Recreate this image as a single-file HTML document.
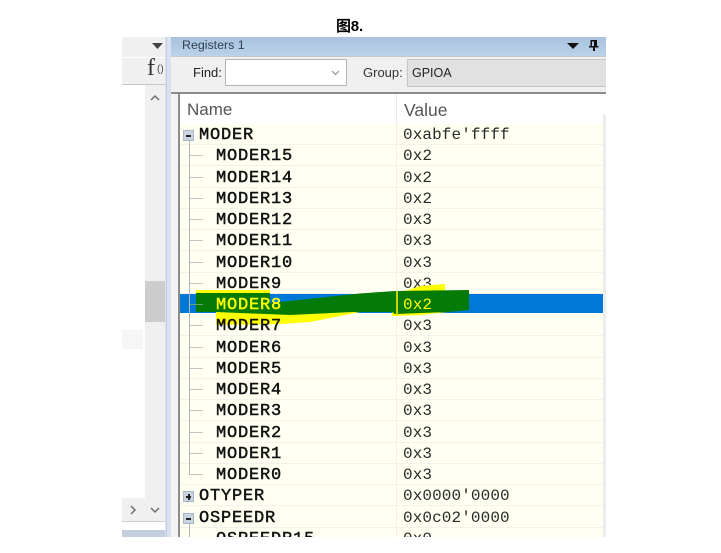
<!DOCTYPE html>
<html><head><meta charset="utf-8"><style>
html,body{margin:0;padding:0;background:#fff}
body{width:721px;height:553px;position:relative;overflow:hidden;font-family:"Liberation Sans","Noto Sans CJK SC",sans-serif}
.a{position:absolute}
#list{position:absolute;left:180px;top:124px;width:423px;height:413px;overflow:hidden;background:#fffff2}
.r{position:absolute;left:0;width:423px;height:20px;border-bottom:1.25px solid #f2f2ea;font:normal 17px/23px "Liberation Mono",monospace;letter-spacing:.8px;color:#111;white-space:nowrap}
.r b{position:absolute;top:0;font-weight:normal;-webkit-text-stroke:.45px currentColor}
.r i{position:absolute;left:223px;top:0;font:normal 16px/23px "Liberation Mono",monospace;letter-spacing:.1px;color:#2a2a2a}
.n{left:36px}.t{left:19px}
.tl{position:absolute;left:9px;width:1px;background:#b5b5b5}
.th{position:absolute;left:9px;width:14px;height:1px;background:#c4c4c4}
.box{position:absolute;left:3px;width:9px;height:9px;background:#c9d4e0;border:1px solid #a8b8c8;box-sizing:content-box}
.box:before{content:"";position:absolute;left:2px;top:4px;width:5px;height:2px;background:#222}
.box.p:after{content:"";position:absolute;left:3.5px;top:2px;width:2px;height:6px;background:#222}
</style></head><body>
<div class="a" style="left:336px;top:18px;font-size:15px;font-weight:bold;line-height:18px;color:#000;letter-spacing:-.2px">图8.</div>

<div class="a" style="left:122px;top:37px;width:484px;height:500px;overflow:hidden;background:#fff">
<!-- left panel -->
<div class="a" style="left:0;top:0;width:43px;height:20px;background:#f0f0f0"></div>
<svg class="a" style="left:29px;top:5px" width="13" height="8"><path d="M1 1H12L6.5 7Z" fill="#444"/></svg>
<div class="a" style="left:0;top:21px;width:43px;height:27px;background:#f0f0f0"></div>
<div class="a" style="left:25px;top:18px;font:24px/27px 'Liberation Serif',serif;color:#333">f</div>
<div class="a" style="left:35px;top:26px;font:10px/14px 'Liberation Sans',sans-serif;color:#444">()</div>
<div class="a" style="left:0;top:47px;width:43px;height:1px;background:#c8c8c8"></div>
<div class="a" style="left:23px;top:48px;width:20px;height:436px;background:#f0f0f0"></div>
<div class="a" style="left:0;top:461px;width:43px;height:23px;background:#f0f0f0"></div>
<div class="a" style="left:23px;top:244px;width:20px;height:41px;background:#cdcdcd"></div>
<div class="a" style="left:0;top:293px;width:21px;height:19px;background:#f6f6f6"></div>
<div class="a" style="left:0;top:484px;width:43px;height:1px;background:#d0d0d0"></div>
<div class="a" style="left:0;top:493px;width:43px;height:7px;background:#c3cfdc"></div>
<svg class="a" style="left:0;top:48px" width="44" height="440" fill="none" stroke="#707070" stroke-width="1.5"><path d="M29 15L33 11L37 15"/><path d="M9 421L13 425L9 429"/><path d="M29 423L33 427L37 423"/></svg>
<div class="a" style="left:43px;top:0;width:7px;height:500px;background:#d8e2f2"></div>
<div class="a" style="left:44px;top:0;width:1px;height:500px;background:#c2cede"></div>

<!-- right panel -->
<div class="a" style="left:49px;top:0;width:435px;height:19px;background:linear-gradient(#a8c2dd,#bcd2ea)"></div>
<div class="a" style="left:60px;top:0;font-size:12.4px;line-height:16px;color:#2f3f50">Registers 1</div>
<svg class="a" style="left:444px;top:3px" width="34" height="13"><path d="M1 3H13L7 9Z" fill="#111"/><path d="M24.5 0H31V6H32.5V7.5H29V11H27V7.5H23V6H24.5ZM26 1.5V6H28V1.5Z" fill="#111"/></svg>
<div class="a" style="left:49px;top:19px;width:435px;height:36px;background:#f0f0f0;border-top:1px solid #c8c8c8;box-sizing:border-box"></div>
<div class="a" style="left:71px;top:28px;font-size:13px;line-height:16px;color:#222">Find:</div>
<div class="a" style="left:103px;top:22px;width:122px;height:27px;background:#fff;border:1px solid #b4b4b4;box-sizing:border-box"></div>
<svg class="a" style="left:209px;top:32px" width="10" height="8" fill="none" stroke="#8a8a8a"><path d="M1 2L4.5 5.5L8 2"/></svg>
<div class="a" style="left:241px;top:28px;font-size:13px;line-height:16px;color:#333">Group:</div>
<div class="a" style="left:285px;top:22px;width:199px;height:28px;background:#e1e1e1;border:1px solid #c4c4c4;border-right:0;box-sizing:border-box"></div>
<div class="a" style="left:290px;top:28px;font-size:12.5px;line-height:16px;color:#222">GPIOA</div>
<div class="a" style="left:49px;top:55px;width:435px;height:2px;background:#8c8c8c"></div>
<div class="a" style="left:49px;top:57px;width:9px;height:443px;background:#f4f4f4;border-right:2px solid #8c8c8c;box-sizing:border-box"></div>
<div class="a" style="left:65px;top:63px;font-size:17px;line-height:20px;color:#555">Name</div>
<div class="a" style="left:282px;top:63px;font-size:17.5px;line-height:20px;color:#555">Value</div>
<div class="a" style="left:274px;top:57px;width:1px;height:30px;background:#ececec"></div>
<div class="a" style="left:481px;top:78px;width:3px;height:422px;background:#ececec"></div>
</div>

<div id="list">
<div class="a" style="left:216px;top:0;width:1px;height:413px;background:#f0f0e6"></div>
<div class="r" style="top:0"><span class="box" style="top:6px"></span><b class="t">MODER</b><i>0xabfe'ffff</i></div>
<div class="r" style="top:21.25px"><span class="th" style="top:10px"></span><b class="n">MODER15</b><i>0x2</i></div>
<div class="r" style="top:42.5px"><span class="th" style="top:10px"></span><b class="n">MODER14</b><i>0x2</i></div>
<div class="r" style="top:63.75px"><span class="th" style="top:10px"></span><b class="n">MODER13</b><i>0x2</i></div>
<div class="r" style="top:85px"><span class="th" style="top:10px"></span><b class="n">MODER12</b><i>0x3</i></div>
<div class="r" style="top:106.25px"><span class="th" style="top:10px"></span><b class="n">MODER11</b><i>0x3</i></div>
<div class="r" style="top:127.5px"><span class="th" style="top:10px"></span><b class="n">MODER10</b><i>0x3</i></div>
<div class="r" style="top:148.75px"><span class="th" style="top:10px"></span><b class="n">MODER9</b><i>0x3</i></div>
<div class="a" style="left:0;top:169.5px;width:423px;height:19.5px;background:#0078d7"></div>
<svg class="a" style="left:0;top:155px" width="423" height="50">
<path d="M16 11H90V15H16Z" fill="#ffff00"/>
<path d="M225 12L240 7L265 5V12Z" fill="#ffff00"/>
<path d="M36 33H180L130 43L100 45L36 46Z" fill="#ffff00"/>
<path d="M212 33H268L240 36L212 37Z" fill="#ffff00"/>
<path d="M16 14H90V24L180 14.5L215 12L289 11V31L268 33L215 35L212 33H173L110 36L36 33H16Z" fill="#057a05"/>
<path d="M216 12H218V36H216Z" fill="#c8d400"/></svg>
<div class="r" style="top:170px;border:0"><span class="th" style="top:10px;background:#6aa06a"></span><b class="n" style="color:#ff0">MODER8</b><i style="color:#ff0">0x2</i></div>
<div class="r" style="top:191.25px;background:transparent"><span class="th" style="top:10px"></span><b class="n">MODER7</b><i>0x3</i></div>
<div class="r" style="top:212.5px"><span class="th" style="top:10px"></span><b class="n">MODER6</b><i>0x3</i></div>
<div class="r" style="top:233.75px"><span class="th" style="top:10px"></span><b class="n">MODER5</b><i>0x3</i></div>
<div class="r" style="top:255px"><span class="th" style="top:10px"></span><b class="n">MODER4</b><i>0x3</i></div>
<div class="r" style="top:276.25px"><span class="th" style="top:10px"></span><b class="n">MODER3</b><i>0x3</i></div>
<div class="r" style="top:297.5px"><span class="th" style="top:10px"></span><b class="n">MODER2</b><i>0x3</i></div>
<div class="r" style="top:318.75px"><span class="th" style="top:10px"></span><b class="n">MODER1</b><i>0x3</i></div>
<div class="r" style="top:340px"><span class="th" style="top:10px"></span><b class="n">MODER0</b><i>0x3</i></div>
<div class="r" style="top:361.25px"><span class="box p" style="top:6px"></span><b class="t">OTYPER</b><i>0x0000'0000</i></div>
<div class="r" style="top:382.5px"><span class="box" style="top:6px"></span><b class="t">OSPEEDR</b><i>0x0c02'0000</i></div>
<div class="r" style="top:403.75px"><span class="th" style="top:10px"></span><b class="n">OSPEEDR15</b><i>0x0</i></div>
<div class="tl" style="top:17px;height:334px"></div>
<div class="tl" style="top:399px;height:14px"></div>
</div>
</body></html>
